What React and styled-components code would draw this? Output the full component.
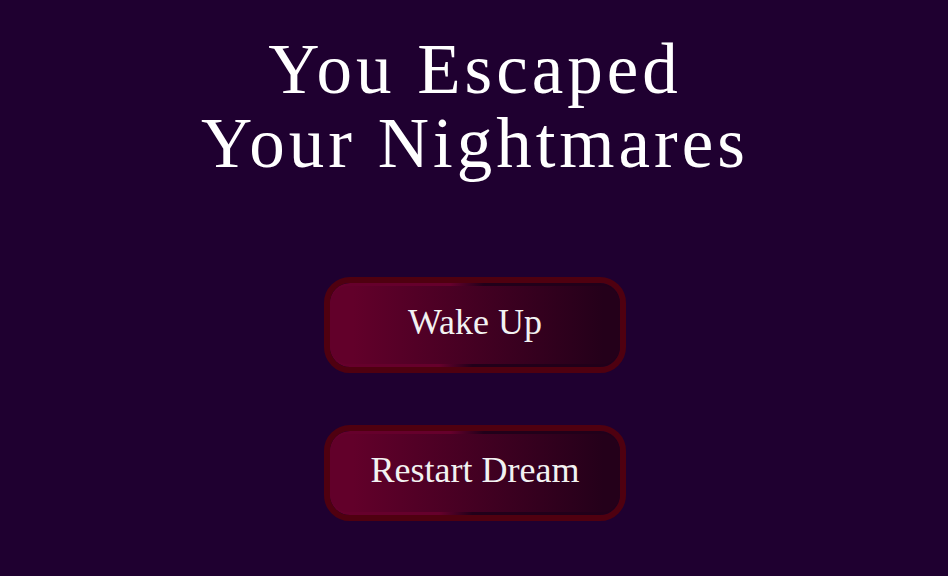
import React from "react";
import styled, { createGlobalStyle } from "styled-components";

const GlobalStyle = createGlobalStyle`
  * {
    box-sizing: border-box;
  }
  body {
    margin: 0;
    background-color: #1f0030;
  }
`;

const Screen = styled.main`
  min-height: 100vh;
  padding: 32px 16px 32px 18px;
  display: flex;
  flex-direction: column;
  align-items: center;
  font-family: "Liberation Serif", "Times New Roman", serif;
`;

const Title = styled.h1`
  margin: 0 0 97px;
  max-width: 600px;
  color: #ffffff;
  font-size: 71px;
  font-weight: 400;
  line-height: 74px;
  letter-spacing: 4px;
  text-align: center;
`;

const Menu = styled.div`
  width: 100%;
  display: flex;
  flex-direction: column;
  align-items: center;
  gap: 52px;
`;

const MenuButton = styled.button`
  width: 302px;
  max-width: 100%;
  height: 96px;
  padding: 3px 0;
  display: flex;
  border: 6px solid #4f0010;
  border-radius: 26px;
  background: linear-gradient(98deg, #66002c 40%, #21001a 51%) padding-box;
  color: #f2f2f2;
  font-family: inherit;
  font-size: 36px;
  line-height: 40px;
  cursor: pointer;
`;

const ButtonLabel = styled.span`
  width: 100%;
  height: 100%;
  padding-bottom: 6px;
  display: flex;
  align-items: center;
  justify-content: center;
  border-radius: 18px;
  background: linear-gradient(90deg, #62002a 8%, #24001a 94%);
`;

const App = () => {
  return (
    <>
      <GlobalStyle />
      <Screen>
        <Title>
          You Escaped
          <br />
          Your Nightmares
        </Title>
        <Menu>
          <MenuButton type="button">
            <ButtonLabel>Wake Up</ButtonLabel>
          </MenuButton>
          <MenuButton type="button">
            <ButtonLabel>Restart Dream</ButtonLabel>
          </MenuButton>
        </Menu>
      </Screen>
    </>
  );
};

export default App;
